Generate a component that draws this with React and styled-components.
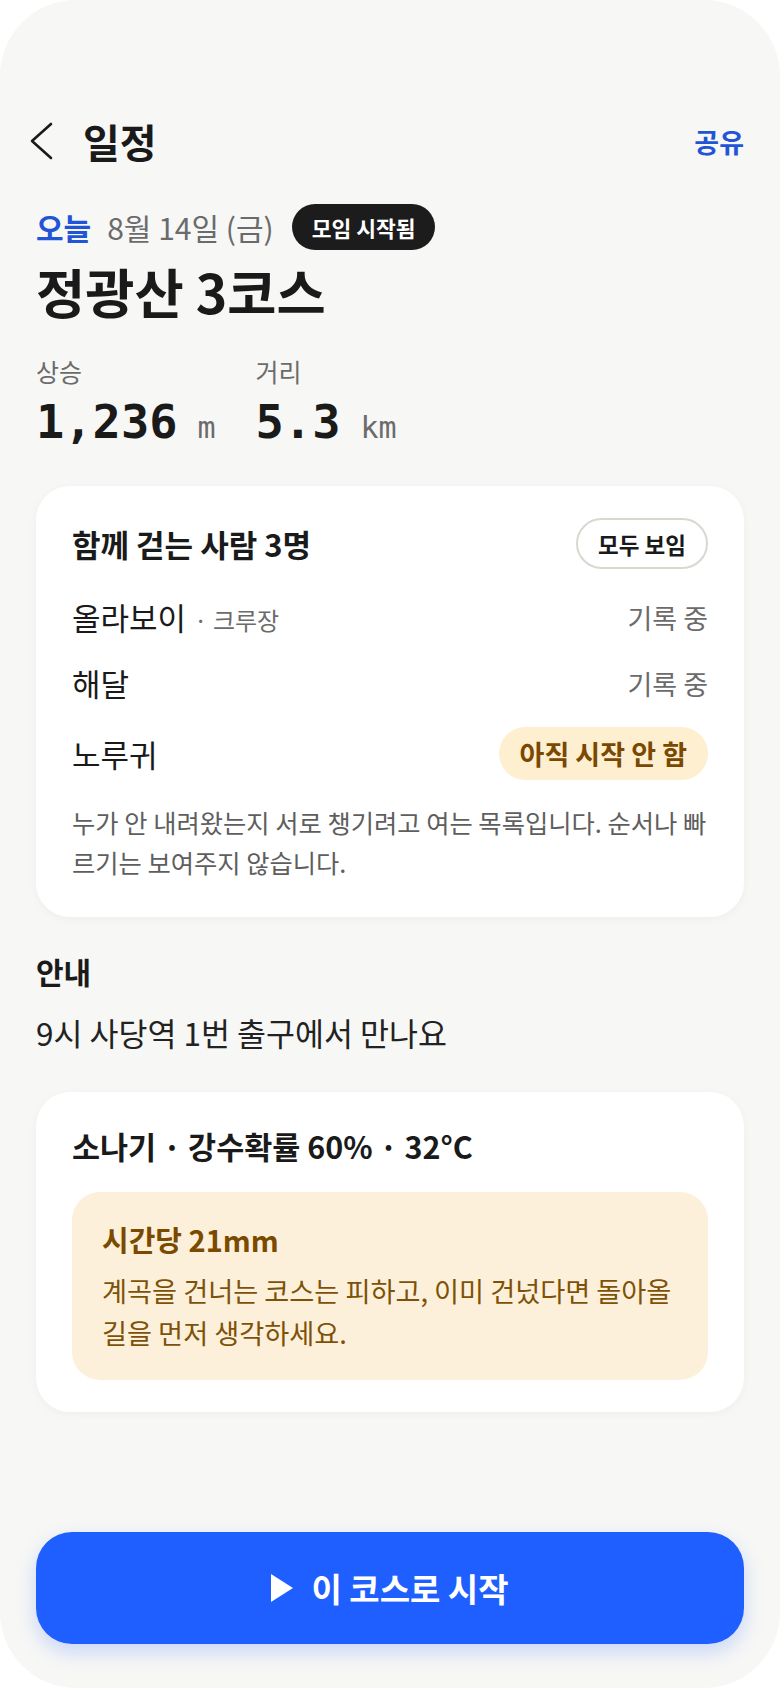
import React from 'react'
import styled, { createGlobalStyle } from 'styled-components'

const GlobalStyle = createGlobalStyle`
  html, body {
    margin: 0;
    padding: 0;
    background: #ffffff;
  }
  body {
    font-family: "Noto Sans CJK KR", "Noto Sans", sans-serif;
    color: #1a1a1a;
  }
  * {
    box-sizing: border-box;
  }
`

const Phone = styled.div`
  width: 780px;
  min-height: 1688px;
  background: #f7f7f5;
  border-radius: 76px;
  display: flex;
  flex-direction: column;
  padding: 113px 36px 44px;
`

const TopBar = styled.header`
  display: flex;
  align-items: center;
  height: 56px;
`

const BackButton = styled.button`
  border: 0;
  background: none;
  padding: 0;
  margin-left: -7px;
  width: 24px;
  height: 38px;
  display: flex;
  cursor: pointer;
`

const PageTitle = styled.h1`
  margin: 0 0 0 30px;
  font-size: 40px;
  font-weight: 700;
  line-height: 56px;
`

const ShareLink = styled.button`
  margin-left: auto;
  border: 0;
  background: none;
  padding: 0;
  font-family: inherit;
  font-size: 27px;
  font-weight: 700;
  color: #2154d6;
  cursor: pointer;
`

const DateRow = styled.div`
  display: flex;
  align-items: center;
  height: 46px;
  margin-top: 35px;
`

const Today = styled.span`
  font-size: 30px;
  font-weight: 700;
  color: #2154d6;
`

const DateText = styled.span`
  margin-left: 16px;
  font-size: 30px;
  color: #6b6b6b;
`

const StatusBadge = styled.span`
  margin-left: 18px;
  height: 46px;
  padding: 0 20px;
  border-radius: 23px;
  background: #1c1c1c;
  color: #fff;
  font-size: 21.5px;
  font-weight: 700;
  display: inline-flex;
  align-items: center;
`

const CourseTitle = styled.h2`
  margin: 10px 0 0;
  font-size: 53.5px;
  font-weight: 700;
  line-height: 62px;
`

const Stats = styled.div`
  display: flex;
  gap: 40px;
  margin-top: 33px;
`

const StatLabel = styled.div`
  font-size: 25px;
  line-height: 32px;
  color: #6b6b6b;
`

const StatValue = styled.div`
  display: flex;
  align-items: baseline;
  height: 56px;
  margin-top: 7px;
  line-height: 56px;
  font-family: "DejaVu Sans Mono", monospace;
`

const StatNumber = styled.span`
  font-size: 47px;
  font-weight: 700;
  color: #1a1a1a;
`

const StatUnit = styled.span`
  margin-left: 20px;
  font-size: 30px;
  line-height: 1;
  color: #6b6b6b;
`

const Card = styled.section`
  margin-top: ${p => p.$top}px;
  background: #fff;
  border-radius: 34px;
  padding: ${p => p.$pad};
  box-shadow: 0 2px 10px rgba(0, 0, 0, 0.04);
`

const CardHead = styled.div`
  display: flex;
  align-items: center;
  justify-content: space-between;
`

const CardTitle = styled.h3`
  margin: 0;
  font-size: ${p => p.$size}px;
  font-weight: 700;
  line-height: 44px;
`

const PillButton = styled.button`
  height: 51px;
  padding: 0 20px;
  border: 2px solid #d9d7d0;
  border-radius: 26px;
  background: #fff;
  font-family: inherit;
  font-size: 22.5px;
  font-weight: 700;
  color: #1a1a1a;
  cursor: pointer;
`

const MemberList = styled.ul`
  list-style: none;
  margin: 26px 0 0;
  padding: 0;
  display: flex;
  flex-direction: column;
  gap: 22px;
`

const MemberRow = styled.li`
  display: flex;
  align-items: center;
  justify-content: space-between;
  min-height: 44px;
`

const MemberName = styled.span`
  font-size: 31px;
  line-height: 44px;
`

const MemberRole = styled.span`
  margin-left: 8px;
  font-size: 24px;
  color: #6b6b6b;
`

const MemberStatus = styled.span`
  font-size: 27px;
  color: #6b6b6b;
`

const WaitingBadge = styled.span`
  height: 53px;
  padding: 0 21px;
  border-radius: 27px;
  background: #fdefd0;
  color: #7a4800;
  font-size: 27px;
  font-weight: 700;
  display: inline-flex;
  align-items: center;
`

const CardNote = styled.p`
  margin: 22px 0 0;
  font-size: 25.3px;
  line-height: 40px;
  color: #5e5e5e;
`

const SectionLabel = styled.h3`
  margin: 34px 0 0;
  font-size: 30px;
  font-weight: 700;
  line-height: 40px;
`

const Notice = styled.p`
  margin: 19px 0 0;
  font-size: 31.5px;
  line-height: 44px;
  color: #222;
`

const WarningBox = styled.div`
  margin-top: 24px;
  background: #fdf0da;
  border-radius: 28px;
  padding: 27px 30px 27px;
`

const WarningTitle = styled.div`
  font-size: 29px;
  font-weight: 700;
  line-height: 40px;
  color: #7a4a00;
`

const WarningText = styled.p`
  margin: 10px 0 0;
  font-size: 27.2px;
  line-height: 42px;
  color: #7d5208;
`

const StartButton = styled.button`
  margin-top: auto;
  height: 112px;
  border: 0;
  border-radius: 36px;
  background: #1f5eff;
  box-shadow: 0 8px 20px rgba(31, 94, 255, 0.22);
  display: flex;
  align-items: center;
  justify-content: center;
  gap: 18px;
  color: #fff;
  font-family: inherit;
  font-size: 33px;
  font-weight: 700;
  cursor: pointer;
`

const members = [
  { name: '올라보이', role: '크루장', status: '기록 중' },
  { name: '해달', status: '기록 중' },
  { name: '노루귀', waiting: true, status: '아직 시작 안 함' },
]

export default function App() {
  return (
    <>
      <GlobalStyle />
      <Phone>
        <TopBar>
          <BackButton aria-label="뒤로">
            <svg width="24" height="38" viewBox="0 0 24 38">
              <path d="M22 2 L3 19 L22 36" fill="none" stroke="#1a1a1a" strokeWidth="2.6" strokeLinecap="round" strokeLinejoin="round" />
            </svg>
          </BackButton>
          <PageTitle>일정</PageTitle>
          <ShareLink>공유</ShareLink>
        </TopBar>

        <DateRow>
          <Today>오늘</Today>
          <DateText>8월 14일 (금)</DateText>
          <StatusBadge>모임 시작됨</StatusBadge>
        </DateRow>
        <CourseTitle>정광산 3코스</CourseTitle>

        <Stats>
          <div>
            <StatLabel>상승</StatLabel>
            <StatValue>
              <StatNumber>1,236</StatNumber>
              <StatUnit>m</StatUnit>
            </StatValue>
          </div>
          <div>
            <StatLabel>거리</StatLabel>
            <StatValue>
              <StatNumber>5.3</StatNumber>
              <StatUnit>km</StatUnit>
            </StatValue>
          </div>
        </Stats>

        <Card $top={36} $pad="32px 36px 35px">
          <CardHead>
            <CardTitle $size={31}>함께 걷는 사람 3명</CardTitle>
            <PillButton>모두 보임</PillButton>
          </CardHead>
          <MemberList>
            {members.map(m => (
              <MemberRow key={m.name}>
                <span>
                  <MemberName>{m.name}</MemberName>
                  {m.role && <MemberRole>· {m.role}</MemberRole>}
                </span>
                {m.waiting
                  ? <WaitingBadge>{m.status}</WaitingBadge>
                  : <MemberStatus>{m.status}</MemberStatus>}
              </MemberRow>
            ))}
          </MemberList>
          <CardNote>누가 안 내려왔는지 서로 챙기려고 여는 목록입니다. 순서나 빠르기는 보여주지 않습니다.</CardNote>
        </Card>

        <SectionLabel>안내</SectionLabel>
        <Notice>9시 사당역 1번 출구에서 만나요</Notice>

        <Card $top={38} $pad="32px 36px 32px">
          <CardTitle $size={30.5}>소나기 · 강수확률 60% · 32°C</CardTitle>
          <WarningBox>
            <WarningTitle>시간당 21mm</WarningTitle>
            <WarningText>계곡을 건너는 코스는 피하고, 이미 건넜다면 돌아올 길을 먼저 생각하세요.</WarningText>
          </WarningBox>
        </Card>

        <StartButton>
          <svg width="22" height="28" viewBox="0 0 22 28">
            <polygon points="0,0 22,14 0,28" fill="#fff" />
          </svg>
          이 코스로 시작
        </StartButton>
      </Phone>
    </>
  )
}
